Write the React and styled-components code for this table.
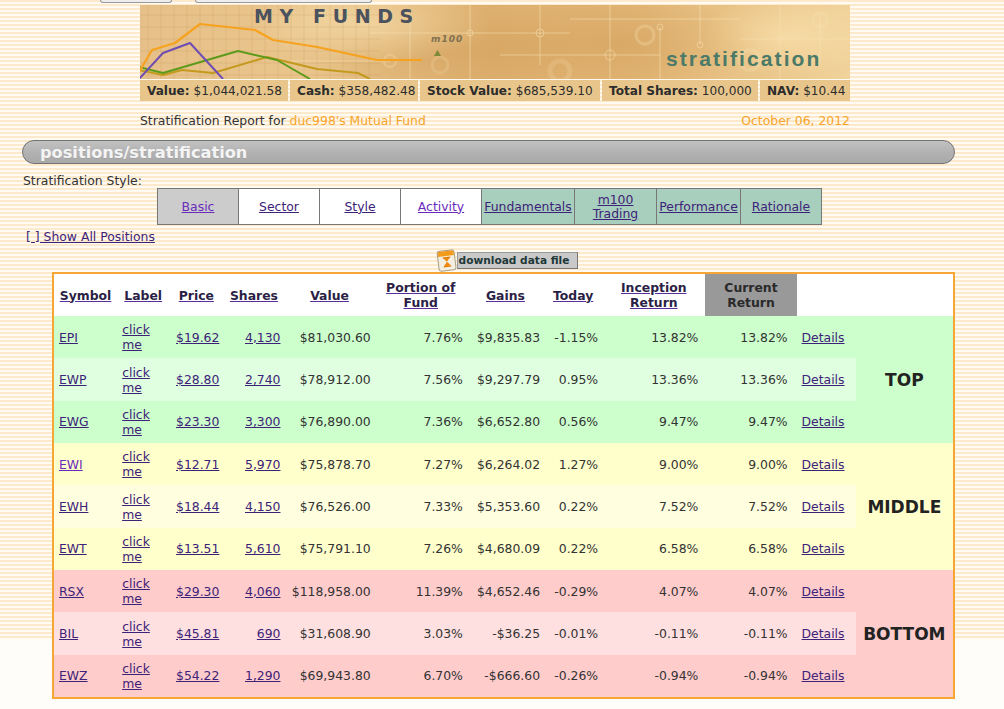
import React from "react";
import styled, { createGlobalStyle } from "styled-components";

const GlobalStyle = createGlobalStyle`
  html, body { margin: 0; padding: 0; }
  body {
    background-color: #fffdf9;
    background-image: repeating-linear-gradient(to bottom, #fde9cc 0px, #fde9cc 2px, #fffaf2 2px, #fffaf2 4px);
    background-size: 100% 640px;
    background-repeat: no-repeat;
    font-family: "DejaVu Sans", Verdana, sans-serif;
    font-size: 12.4px;
    color: #333;
  }
`;

const Page = styled.div`
  width: 1004px;
  height: 709px;
  overflow: hidden;
  display: flex;
  flex-direction: column;
`;

const TopStubs = styled.div`
  display: flex;
  height: 4px;
  padding-left: 100px;
  gap: 23px;
`;

const Stub = styled.div`
  width: ${(p) => p.$w}px;
  height: 3px;
  box-sizing: border-box;
  background: #eeeeee;
  border: 1px solid #9a9a9a;
  border-top: none;
  border-radius: 0 0 3px 3px;
`;

const HeaderBlock = styled.div`
  margin: 1px 0 0 140px;
  width: 710px;
  display: flex;
  flex-direction: column;
  gap: 1px;
`;

const Banner = styled.div`
  position: relative;
  height: 74px;
  overflow: hidden;
  background:
    radial-gradient(ellipse 120px 40px at 230px 20px, rgba(255, 236, 190, 0.5), transparent),
    radial-gradient(ellipse 150px 50px at 300px 45px, rgba(200, 145, 75, 0.35), transparent),
    radial-gradient(ellipse 140px 50px at 480px 40px, rgba(205, 150, 80, 0.4), transparent),
    radial-gradient(ellipse 90px 40px at 650px 30px, rgba(255, 232, 180, 0.55), transparent),
    linear-gradient(to right, #e6c088 0%, #e9c58c 25%, #deb06f 50%, #e2b676 70%, #f0d29a 100%);
`;

const BannerArt = styled.svg`
  position: absolute;
  left: 0;
  top: 0;
`;

const FundsTitle = styled.div`
  position: absolute;
  left: 114px;
  top: 0px;
  font-family: "DejaVu Sans", Verdana, sans-serif;
  font-weight: bold;
  font-size: 19px;
  letter-spacing: 6.6px;
  color: #4a525e;
`;

const M100 = styled.div`
  position: absolute;
  left: 291px;
  top: 29px;
  font-family: "DejaVu Sans", Verdana, sans-serif;
  font-style: italic;
  font-weight: bold;
  font-size: 9px;
  letter-spacing: 1px;
  color: #80704f;
`;

const StratTitle = styled.div`
  position: absolute;
  left: 526px;
  top: 42px;
  font-family: "Liberation Sans", Arial, sans-serif;
  font-weight: bold;
  font-size: 21px;
  letter-spacing: 2.1px;
  color: #4b7a68;
`;

const StatsBar = styled.div`
  display: flex;
  gap: 2px;
  height: 21px;
`;

const StatCell = styled.div`
  width: ${(p) => p.$w}px;
  box-sizing: border-box;
  background: #e8c68b;
  display: flex;
  align-items: center;
  padding-left: 7px;
  white-space: pre;
  font-size: 12.1px;
  color: #2c2c2c;
`;

const ReportLine = styled.div`
  margin: 12px 0 0 140px;
  width: 710px;
  display: flex;
  justify-content: space-between;
  line-height: 16px;
  color: #333;
`;

const Orange = styled.span`
  color: #f7a52a;
`;

const SectionBar = styled.div`
  margin: 11px 0 0 22px;
  width: 933px;
  height: 24px;
  box-sizing: border-box;
  border: 1px solid #727272;
  border-radius: 12px;
  background: linear-gradient(to bottom, #c2c2c2 0%, #b2b2b2 50%, #a9a9a9 100%);
  display: flex;
  align-items: center;
  padding-left: 17px;
  font-weight: bold;
  font-size: 16.2px;
  color: #f4f4f4;
  text-shadow: 0 1px 0 rgba(0,0,0,0.08);
`;

const StyleLabel = styled.div`
  margin: 10px 0 0 23px;
  line-height: 14px;
  color: #333;
`;

const Tabs = styled.div`
  margin-left: 157px;
  display: grid;
  grid-template-columns: 80px 80px 80px 80px 92px 81px 83px 80px;
  gap: 1px;
  background: #777;
  border: 1px solid #777;
  width: max-content;
`;

const Tab = styled.div`
  height: 35px;
  display: flex;
  align-items: center;
  justify-content: center;
  text-align: center;
  line-height: 14px;
  background: ${(p) => (p.$kind === "active" ? "#cccccc" : p.$kind === "green" ? "#a8cebd" : "#ffffff")};
`;

const Link = styled.a`
  color: ${(p) => (p.$bright ? "#6a2bbb" : "#3d2378")};
  text-decoration: underline;
  cursor: pointer;
`;

const ShowAll = styled.div`
  margin: 5px 0 0 26px;
  line-height: 14px;
`;

const DownloadRow = styled.div`
  margin-top: 4px;
  display: flex;
  align-items: center;
  justify-content: center;
  padding-left: 9px;
  height: 24px;
`;

const DownloadButton = styled.div`
  height: 17px;
  box-sizing: border-box;
  padding: 0 8px 0 1px;
  display: flex;
  align-items: center;
  background: #c9c9c9;
  border: 1px solid #9a9a9a;
  border-right-color: #777;
  border-bottom-color: #777;
  font-weight: bold;
  font-size: 10.6px;
  color: #1e3838;
  margin-left: -2px;
`;

const TableWrap = styled.div`
  margin-left: 52px;
`;

const Table = styled.table`
  border-collapse: collapse;
  table-layout: fixed;
  width: 903px;
  border: 2px solid #f6a635;
  background: #ffffff;
`;

const Th = styled.th`
  height: 42px;
  padding: 0;
  font-weight: bold;
  text-align: center;
  vertical-align: middle;
  line-height: 15px;
  background: ${(p) => (p.$gray ? "#999999" : "transparent")};
  color: #2a2a2a;
`;

const HeadLink = styled.a`
  color: #2b1f45;
  text-decoration: underline;
  text-decoration-color: #5a2d9a;
`;

const Td = styled.td`
  height: 42.35px;
  padding: ${(p) => (p.$left ? "0 0 0 5px" : `0 ${p.$pr ?? 4}px 0 0`)};
  text-align: ${(p) => (p.$left ? "left" : "right")};
  vertical-align: middle;
  line-height: 15px;
  background: ${(p) => p.$bg};
  color: #333;
  white-space: ${(p) => (p.$wrap ? "normal" : "nowrap")};
`;

const GroupCell = styled.td`
  background: ${(p) => p.$bg};
  text-align: center;
  vertical-align: middle;
  font-weight: bold;
  font-size: 17px;
  color: #222;
  padding: 0;
`;

const colWidths = [64, 52, 54, 61, 90, 92, 77, 58, 103, 91, 59, 98];

const groups = [
  {
    name: "TOP",
    main: "#ccffcc",
    light: "#e0ffe0",
    rows: [
      ["EPI", "$19.62", "4,130", "$81,030.60", "7.76%", "$9,835.83", "-1.15%", "13.82%", "13.82%"],
      ["EWP", "$28.80", "2,740", "$78,912.00", "7.56%", "$9,297.79", "0.95%", "13.36%", "13.36%"],
      ["EWG", "$23.30", "3,300", "$76,890.00", "7.36%", "$6,652.80", "0.56%", "9.47%", "9.47%"],
    ],
  },
  {
    name: "MIDDLE",
    main: "#ffffcc",
    light: "#ffffe0",
    rows: [
      ["EWI", "$12.71", "5,970", "$75,878.70", "7.27%", "$6,264.02", "1.27%", "9.00%", "9.00%"],
      ["EWH", "$18.44", "4,150", "$76,526.00", "7.33%", "$5,353.60", "0.22%", "7.52%", "7.52%"],
      ["EWT", "$13.51", "5,610", "$75,791.10", "7.26%", "$4,680.09", "0.22%", "6.58%", "6.58%"],
    ],
  },
  {
    name: "BOTTOM",
    main: "#ffcccc",
    light: "#ffe0e0",
    rows: [
      ["RSX", "$29.30", "4,060", "$118,958.00", "11.39%", "$4,652.46", "-0.29%", "4.07%", "4.07%"],
      ["BIL", "$45.81", "690", "$31,608.90", "3.03%", "-$36.25", "-0.01%", "-0.11%", "-0.11%"],
      ["EWZ", "$54.22", "1,290", "$69,943.80", "6.70%", "-$666.60", "-0.26%", "-0.94%", "-0.94%"],
    ],
  },
];

function DownloadIcon() {
  return (
    <svg width="24" height="25" viewBox="0 0 24 25">
      <g transform="rotate(-7 12 12)">
        <rect x="3" y="2.5" width="17" height="20" rx="2.5" fill="#f3eee0" stroke="#a89f88" strokeWidth="1" />
        <path d="M3.5 5 a2 2 0 0 1 2 -2 h12 a2 2 0 0 1 2 2 v3 h-16 z" fill="#f39b1c" />
        <path d="M8 9.5 h7.5 l-3.75 4.2 z M11.75 13.7 l3.75 4.3 h-7.5 z" fill="#f08a0e" />
        <path d="M8 9.5 h7.5 M8 18.5 h7.5" stroke="#e07d08" strokeWidth="1.2" />
      </g>
    </svg>
  );
}

function BannerDrawing() {
  const gridV = [];
  for (let x = 8; x < 240; x += 13) gridV.push(x);
  const gridH = [];
  for (let y = 10; y < 74; y += 12) gridH.push(y);
  return (
    <BannerArt width="710" height="74" viewBox="0 0 710 74">
      <g stroke="#b48a52" strokeOpacity="0.25" strokeWidth="0.8">
        {gridV.map((x) => (
          <line key={"v" + x} x1={x} y1="0" x2={x} y2="74" />
        ))}
        {gridH.map((y) => (
          <line key={"h" + y} x1="0" y1={y} x2="240" y2={y} />
        ))}
      </g>
      <g stroke="#f8e2b4" strokeOpacity="0.55" strokeWidth="1" fill="none">
        <line x1="230" y1="28" x2="430" y2="28" />
        <line x1="270" y1="10" x2="270" y2="74" />
        <line x1="330" y1="0" x2="330" y2="74" />
        <line x1="400" y1="0" x2="400" y2="60" />
        <line x1="360" y1="50" x2="520" y2="50" />
        <line x1="430" y1="14" x2="600" y2="14" />
        <line x1="470" y1="0" x2="470" y2="74" />
        <line x1="520" y1="22" x2="520" y2="74" />
        <line x1="560" y1="0" x2="560" y2="40" />
        <line x1="600" y1="34" x2="710" y2="34" />
        <line x1="640" y1="0" x2="640" y2="74" />
        <line x1="680" y1="8" x2="680" y2="60" />
        <line x1="150" y1="56" x2="250" y2="56" />
        <circle cx="330" cy="28" r="3" />
        <circle cx="400" cy="28" r="4" />
        <circle cx="470" cy="50" r="5" />
        <circle cx="520" cy="22" r="3" />
        <circle cx="505" cy="30" r="9" strokeWidth="3" strokeOpacity="0.3" />
        <circle cx="610" cy="55" r="10" strokeWidth="4" strokeOpacity="0.25" />
        <circle cx="640" cy="34" r="3" />
        <circle cx="680" cy="15" r="7" strokeWidth="3" strokeOpacity="0.3" />
        <circle cx="560" cy="40" r="3" />
        <circle cx="250" cy="56" r="6" strokeWidth="2" strokeOpacity="0.3" />
        <circle cx="300" cy="60" r="8" strokeWidth="3" strokeOpacity="0.2" />
        <circle cx="420" cy="66" r="10" strokeWidth="5" strokeOpacity="0.2" />
      </g>
      <g fill="none" strokeWidth="2" strokeLinejoin="round">
        <polyline points="-1,65 23,70 42,65 73,68 127,52 177,64 218,68 230,74" stroke="#c39a1e" />
        <polyline points="-1,62 23,68 98,46 137,55 170,74" stroke="#5d9a1c" />
        <polyline points="-1,67 12,45 35,38 60,19 115,25 133,35 177,42 237,55 282,55" stroke="#f7a21e" strokeWidth="2.2" />
        <polyline points="-1,74 23,48 50,38 83,74" stroke="#6f4cb3" />
      </g>
      <polygon points="294,51 297.5,45 301,51" fill="#7d8a35" />
    </BannerArt>
  );
}

export default function App() {
  return (
    <>
      <GlobalStyle />
      <Page>
        <TopStubs>
          <Stub $w={72} />
          <Stub $w={177} />
        </TopStubs>
        <HeaderBlock>
          <Banner>
            <BannerDrawing />
            <FundsTitle>MY FUNDS</FundsTitle>
            <M100>m100</M100>
            <StratTitle>stratification</StratTitle>
          </Banner>
          <StatsBar>
            <StatCell $w={148}><b>Value:</b> $1,044,021.58</StatCell>
            <StatCell $w={128}><b>Cash:</b> $358,482.48</StatCell>
            <StatCell $w={180}><b>Stock Value:</b> $685,539.10</StatCell>
            <StatCell $w={156}><b>Total Shares:</b> 100,000</StatCell>
            <StatCell $w={90}><b>NAV:</b> $10.44</StatCell>
          </StatsBar>
        </HeaderBlock>
        <ReportLine>
          <span>
            Stratification Report for <Orange>duc998's Mutual Fund</Orange>
          </span>
          <Orange>October 06, 2012</Orange>
        </ReportLine>
        <SectionBar>positions/stratification</SectionBar>
        <StyleLabel>Stratification Style:</StyleLabel>
        <Tabs>
          <Tab $kind="active"><Link $bright>Basic</Link></Tab>
          <Tab><Link>Sector</Link></Tab>
          <Tab><Link>Style</Link></Tab>
          <Tab><Link $bright>Activity</Link></Tab>
          <Tab $kind="green"><Link>Fundamentals</Link></Tab>
          <Tab $kind="green"><Link>m100<br />Trading</Link></Tab>
          <Tab $kind="green"><Link>Performance</Link></Tab>
          <Tab $kind="green"><Link>Rationale</Link></Tab>
        </Tabs>
        <ShowAll>
          <Link>[ ] Show All Positions</Link>
        </ShowAll>
        <DownloadRow>
          <DownloadIcon />
          <DownloadButton>download data file</DownloadButton>
        </DownloadRow>
        <TableWrap>
          <Table>
            <colgroup>
              {colWidths.map((w, i) => (
                <col key={i} style={{ width: w }} />
              ))}
            </colgroup>
            <thead>
              <tr>
                <Th><HeadLink>Symbol</HeadLink></Th>
                <Th><HeadLink>Label</HeadLink></Th>
                <Th><HeadLink>Price</HeadLink></Th>
                <Th><HeadLink>Shares</HeadLink></Th>
                <Th><HeadLink>Value</HeadLink></Th>
                <Th><HeadLink>Portion of<br />Fund</HeadLink></Th>
                <Th><HeadLink>Gains</HeadLink></Th>
                <Th><HeadLink>Today</HeadLink></Th>
                <Th><HeadLink>Inception<br />Return</HeadLink></Th>
                <Th $gray>Current<br />Return</Th>
                <Th />
                <Th />
              </tr>
            </thead>
            <tbody>
              {groups.map((g) =>
                g.rows.map((r, i) => {
                  const bg = i === 1 ? g.light : g.main;
                  return (
                    <tr key={r[0]}>
                      <Td $left $bg={bg}><Link $bright={r[0] === "EWI"}>{r[0]}</Link></Td>
                      <Td $left $wrap $bg={bg}><Link>click me</Link></Td>
                      <Td $bg={bg}><Link>{r[1]}</Link></Td>
                      <Td $bg={bg}><Link>{r[2]}</Link></Td>
                      <Td $bg={bg}>{r[3]}</Td>
                      <Td $bg={bg}>{r[4]}</Td>
                      <Td $bg={bg}>{r[5]}</Td>
                      <Td $bg={bg}>{r[6]}</Td>
                      <Td $bg={bg} $pr={7}>{r[7]}</Td>
                      <Td $bg={bg} $pr={9}>{r[8]}</Td>
                      <Td $left $bg={bg}><Link>Details</Link></Td>
                      {i === 0 && (
                        <GroupCell rowSpan={3} $bg={g.main}>{g.name}</GroupCell>
                      )}
                    </tr>
                  );
                })
              )}
            </tbody>
          </Table>
        </TableWrap>
      </Page>
    </>
  );
}
